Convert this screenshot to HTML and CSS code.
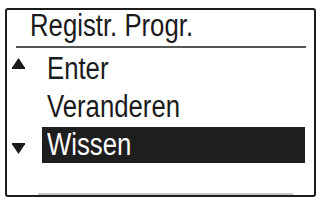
FILE: index.html
```html
<!DOCTYPE html>
<html lang="nl">
<head>
    <meta charset="UTF-8">
    <title>Registr. Progr.</title>
    <link rel="stylesheet" href="styles.css">
</head>
<body>
    <div class="screen">
        <div class="title"><span class="label">Registr. Progr.</span></div>
        <div class="rule"></div>
        <div class="menu">
            <div class="arrow up">
                <svg width="13" height="11" viewBox="0 0 13 11"><polygon points="6.5,0 12.5,9 0.5,9" fill="#1a1a1a"/><rect x="0" y="9" width="13" height="2" fill="#1a1a1a"/></svg>
            </div>
            <div class="item"><span class="label">Enter</span></div>
            <div class="arrow"></div>
            <div class="item"><span class="label">Veranderen</span></div>
            <div class="arrow down">
                <svg width="13" height="11" viewBox="0 0 13 11"><rect x="0" y="0" width="13" height="2" fill="#1a1a1a"/><polygon points="0.5,2 12.5,2 6.5,11" fill="#1a1a1a"/></svg>
            </div>
            <div class="item selected"><span class="label">Wissen</span></div>
        </div>
        <div class="foot"></div>
    </div>
</body>
</html>
```

FILE: styles.css
```css
body { margin: 0; background: #fff; }
.screen { box-sizing: border-box; width: 311px; height: 189px; margin: 8px 0 0 5px; border: 2px solid #1c1c1c; border-radius: 3px; font-family: "Liberation Sans", Arial, sans-serif; font-size: 31px; color: #1a1a1a; }
.label { display: inline-block; transform: scaleX(0.83); transform-origin: left center; white-space: nowrap; }
.title { height: 32px; line-height: 32px; padding-left: 23px; }
.rule { height: 2px; margin: 4px 8px 0 9px; background: #555; }
.menu { display: grid; grid-template-columns: 35px 1fr; grid-auto-rows: 36px; row-gap: 2px; margin-top: 3px; }
.arrow { padding-left: 5px; }
.arrow svg { display: block; }
.arrow.up { padding-top: 7px; }
.arrow.down { padding-top: 16px; }
.item { line-height: 36px; padding-left: 5px; margin-right: 9px; }
.item.selected { background: #1e1e1e; color: #fff; }
.foot { height: 2px; margin: 30px 21px 0 31px; background: #c8c8c8; }
```
